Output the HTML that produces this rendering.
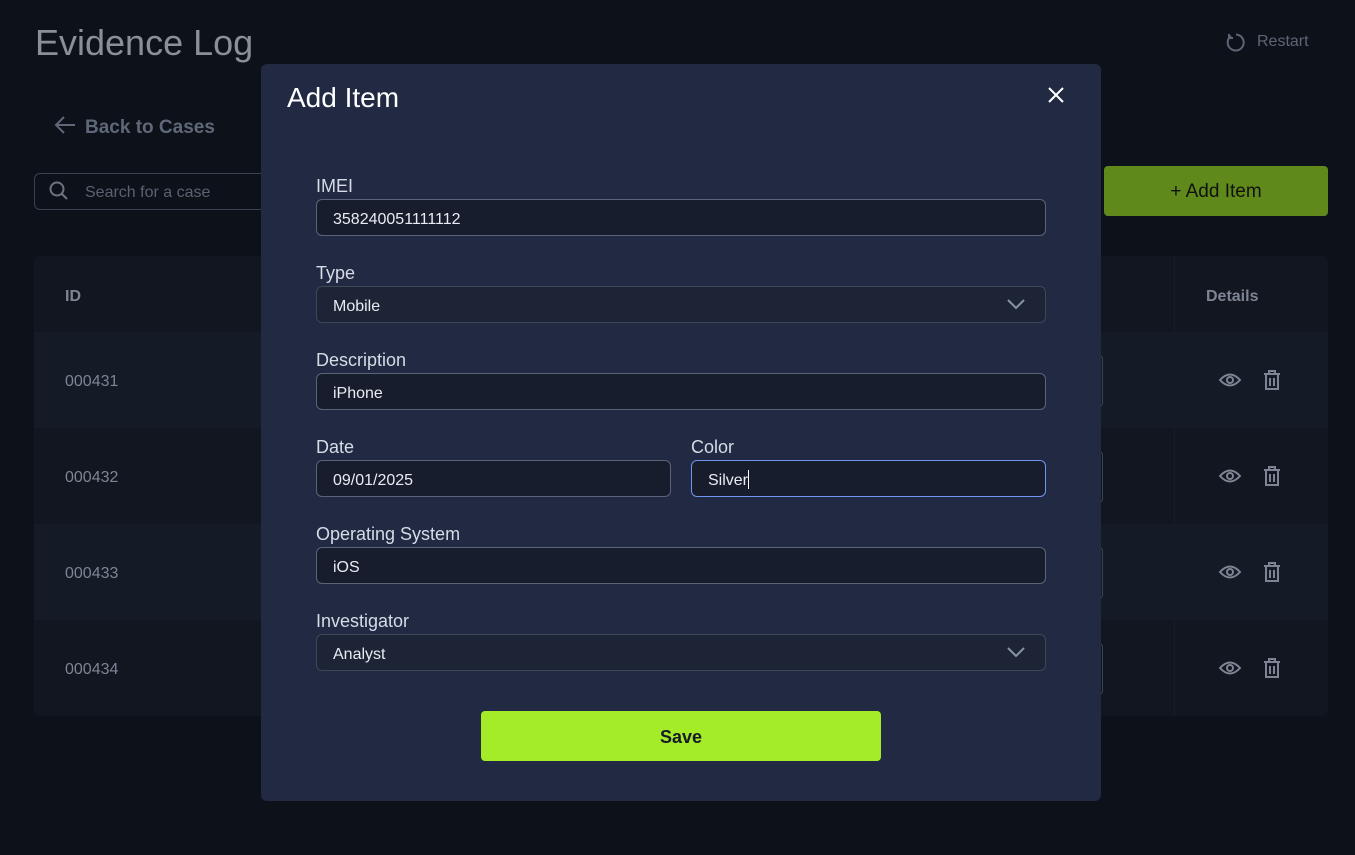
<!DOCTYPE html>
<html><head><meta charset="utf-8"><style>
*{box-sizing:border-box;margin:0;padding:0}
body{width:1355px;height:855px;background:#0d1119;font-family:"Liberation Sans",sans-serif;position:relative;overflow:hidden;color:#fff}
.a{position:absolute}
.lbl{position:absolute;left:316px;font-size:18px;color:#d6dbe6}
.inp{position:absolute;left:316px;width:730px;height:37px;border:1px solid #5a6478;border-radius:6px;background:#171d2d;font-size:16px;color:#e8ecf2;padding:11px 0 0 16px}
.sel{background:#1c2436;border-color:#3d475a}
.row{position:absolute;left:34px;width:1294px;height:96px}
.id{position:absolute;left:31px;top:41px;font-size:16px;color:#7d8594}
</style></head><body>
<div class="a" style="left:35px;top:22px;font-size:36px;color:#8a8f98">Evidence Log</div>
<div class="a" style="left:1225px;top:31px;font-size:16px;color:#5d6575">
<svg width="22" height="22" viewBox="0 0 22 22" style="position:absolute;left:0;top:0"><path d="M6 5a8 8 0 1 0 5-1.5" fill="none" stroke="#5d6575" stroke-width="2"/><path d="M4 3v4h4" fill="none" stroke="#5d6575" stroke-width="2"/></svg>
<span style="position:absolute;left:32px;top:2px">Restart</span></div>
<div class="a" style="left:54px;top:115px;font-size:19px;color:#5f6878;font-weight:bold">
<svg width="22" height="20" viewBox="0 0 22 20" style="position:absolute;left:0;top:0"><path d="M21 10H2M10 2L2 10l8 8" fill="none" stroke="#5f6878" stroke-width="2"/></svg>
<span style="position:absolute;left:31px;top:2px;white-space:nowrap">Back to Cases</span></div>
<div class="a" style="left:34px;top:173px;width:260px;height:37px;border:1px solid #3a4150;border-radius:6px">
<svg width="20" height="20" viewBox="0 0 20 20" style="position:absolute;left:14px;top:7px"><circle cx="8" cy="8" r="6.5" fill="none" stroke="#6d7480" stroke-width="2"/><path d="M13 13l5 5" stroke="#6d7480" stroke-width="2"/></svg>
<span style="position:absolute;left:50px;top:10px;font-size:16px;color:#5a6170">Search for a case</span></div>
<div class="a" style="left:1104px;top:166px;width:224px;height:50px;background:#5f8a1b;border-radius:4px;font-size:19px;color:#111;text-align:center;line-height:52px">+ Add Item</div>
<div class="row" style="top:256px;height:76px;background:#111620;border-radius:6px 6px 0 0"><div style="position:absolute;left:31px;top:32px;font-size:16px;font-weight:bold;color:#7d8594">ID</div><div style="position:absolute;left:1172px;top:32px;font-size:16px;font-weight:bold;color:#7d8594">Details</div><div style="position:absolute;left:1140px;top:0;width:1px;height:76px;background:#171c27"></div></div>
<div class="row" style="top:332px;background:#151a27"><div class="id">000431</div></div>
<div class="row" style="top:428px;background:#111620"><div class="id">000432</div><div style="position:absolute;left:1140px;top:0;width:1px;height:96px;background:#171c27"></div></div>
<div class="row" style="top:524px;background:#151a27"><div class="id">000433</div></div>
<div class="row" style="top:620px;background:#111620;border-radius:0 0 6px 6px"><div class="id">000434</div><div style="position:absolute;left:1140px;top:0;width:1px;height:96px;background:#171c27"></div></div>
<div class="a" style="left:1090px;top:355px;width:13px;height:52px;border:1px solid #3a4150;border-radius:4px"></div>
<div class="a" style="left:1090px;top:451px;width:13px;height:52px;border:1px solid #3a4150;border-radius:4px"></div>
<div class="a" style="left:1090px;top:547px;width:13px;height:52px;border:1px solid #3a4150;border-radius:4px"></div>
<div class="a" style="left:1090px;top:643px;width:13px;height:52px;border:1px solid #3a4150;border-radius:4px"></div>
<svg class="a" style="left:1218px;top:366px" width="80" height="400" viewBox="0 0 80 400">
<g id="ic" fill="none" stroke="#7d8594" stroke-width="2"><path d="M2 14q10-11 20 0q-10 11-20 0z"/><circle cx="12" cy="14" r="3"/><path d="M46 8h16M51 8V5h6v3M48 9v14h12V9M52 12v8M56 12v8"/></g>
<use href="#ic" y="96"/><use href="#ic" y="192"/><use href="#ic" y="288"/></svg>

<div class="a" style="left:261px;top:64px;width:840px;height:737px;background:#212a42;border-radius:6px"></div>
<div class="a" style="left:287px;top:82px;font-size:28px;color:#fff">Add Item</div>
<svg class="a" style="left:1047px;top:86px" width="18" height="18" viewBox="0 0 18 18"><path d="M2 2l14 14M16 2L2 16" stroke="#fff" stroke-width="2"/></svg>
<div class="lbl" style="top:176px">IMEI</div>
<div class="inp" style="top:199px">358240051111112</div>
<div class="lbl" style="top:263px">Type</div>
<div class="inp sel" style="top:286px">Mobile<svg style="position:absolute;right:20px;top:12px" width="18" height="11" viewBox="0 0 18 11"><path d="M1 1l8 8 8-8" fill="none" stroke="#8a93a6" stroke-width="2"/></svg></div>
<div class="lbl" style="top:350px">Description</div>
<div class="inp" style="top:373px">iPhone</div>
<div class="lbl" style="top:437px">Date</div>
<div class="inp" style="top:460px;width:355px">09/01/2025</div>
<div class="lbl" style="top:437px;left:691px">Color</div>
<div class="inp" style="top:460px;left:691px;width:355px;border-color:#6f95ee;padding-top:9px">Silver<span style="display:inline-block;width:1px;height:19px;background:#fff;vertical-align:-4px"></span></div>
<div class="lbl" style="top:524px">Operating System</div>
<div class="inp" style="top:547px">iOS</div>
<div class="lbl" style="top:611px">Investigator</div>
<div class="inp sel" style="top:634px">Analyst<svg style="position:absolute;right:20px;top:12px" width="18" height="11" viewBox="0 0 18 11"><path d="M1 1l8 8 8-8" fill="none" stroke="#8a93a6" stroke-width="2"/></svg></div>
<div class="a" style="left:481px;top:711px;width:400px;height:50px;background:#a4eb28;border-radius:4px;text-align:center;line-height:52px;font-size:18px;color:#161a2a;font-weight:bold">Save</div>
</body></html>
